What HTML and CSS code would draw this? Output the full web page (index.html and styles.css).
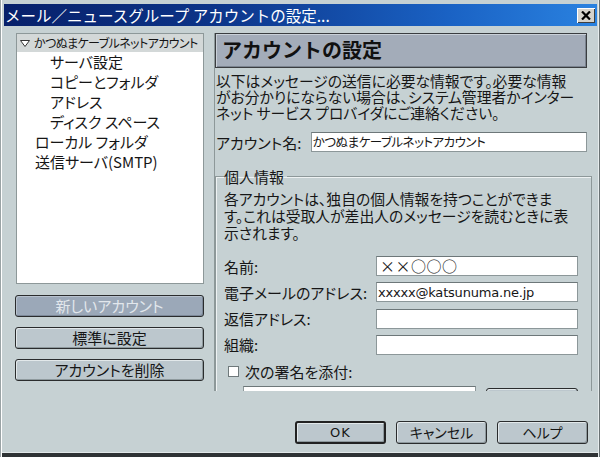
FILE: index.html
```html
<!DOCTYPE html>
<html lang="ja">
<head>
<meta charset="utf-8">
<link rel="stylesheet" href="styles.css">
</head>
<body>
<div class="window">
  <div class="titlebar">
    <span class="title">メール／ニュースグループ アカウントの設定...</span>
    <span class="close"><svg width="10" height="9" viewBox="0 0 10 9"><path d="M1 0.5 L9 8.5 M9 0.5 L1 8.5" stroke="#000" stroke-width="2.2"/></svg></span>
  </div>
  <div class="main">
    <div class="left">
      <div class="tree">
        <div class="row sel"><svg class="twisty" width="10" height="7" viewBox="0 0 10 7"><polygon points="0.5,0.5 9.5,0.5 5,6.5" fill="#fff" stroke="#333" stroke-width="1"/></svg><span class="acct">かつぬまケーブルネットアカウント</span></div>
        <div class="row sub">サーバ設定</div>
        <div class="row sub">コピーとフォルダ</div>
        <div class="row sub">アドレス</div>
        <div class="row sub">ディスク スペース</div>
        <div class="row top">ローカル フォルダ</div>
        <div class="row top">送信サーバ(SMTP)</div>
      </div>
      <div class="btn disabled">新しいアカウント</div>
      <div class="btn">標準に設定</div>
      <div class="btn">アカウントを削除</div>
    </div>
    <div class="pane">
      <div class="header">アカウントの設定</div>
      <div class="desc">
        <div class="line">以下はメッセージの送信に必要な情報です。必要な情報</div>
        <div class="line">がお分かりにならない場合は、システム管理者かインター</div>
        <div class="line">ネット サービス プロバイダにご連絡ください。</div>
      </div>
      <div class="namerow">
        <span class="lbl">アカウント名:</span>
        <div class="input name-input">かつぬまケーブルネットアカウント</div>
      </div>
      <fieldset class="group">
        <legend>個人情報</legend>
        <div class="gdesc">
          <div class="line">各アカウントは、独自の個人情報を持つことができま</div>
          <div class="line">す。これは受取人が差出人のメッセージを読むときに表</div>
          <div class="line">示されます。</div>
        </div>
        <div class="fields">
          <div class="frow"><span class="lbl">名前:</span><div class="input val-name">××○○○</div></div>
          <div class="frow"><span class="lbl">電子メールのアドレス:</span><div class="input val-mail">xxxxx@katsunuma.ne.jp</div></div>
          <div class="frow"><span class="lbl">返信アドレス:</span><div class="input"></div></div>
          <div class="frow"><span class="lbl">組織:</span><div class="input"></div></div>
        </div>
        <div class="checkrow"><span class="checkbox"></span><span class="lbl">次の署名を添付:</span></div>
        <div class="sigrow"><div class="input sig-input"></div><div class="btn sig-btn"></div></div>
      </fieldset>
    </div>
  </div>
  <div class="footer">
    <div class="btn fbtn default">OK</div>
    <div class="btn fbtn">キャンセル</div>
    <div class="btn fbtn">ヘルプ</div>
  </div>
</div>
</body>
</html>
```
FILE: styles.css
```css
html, body {
  margin: 0;
  padding: 0;
}
body {
  width: 600px;
  height: 457px;
  overflow: hidden;
  background: #c6d1d3;
  font-family: "Noto Sans CJK JP", "Liberation Sans", sans-serif;
  color: #161616;
  font-feature-settings: "palt";
}
.window {
  width: 600px;
  height: 457px;
  box-sizing: border-box;
  padding: 4px 3px 0 4px;
  box-shadow: inset 1px 0 #9aa3a5, inset 2px 0 #ffffff, inset -1px 0 #6a7274, inset -2px 0 #e6eced, inset 0 -4px #2f3335, inset 0 -5px #e2e8e9;
  display: flex;
  flex-direction: column;
}
.titlebar {
  height: 22px;
  flex: none;
  background: linear-gradient(90deg, #07206a 0%, #0c3488 35%, #1a62c4 75%, #2a82e0 100%);
  display: flex;
  align-items: flex-start;
  justify-content: space-between;
}
.title {
  color: #fff;
  font-size: 15.5px;
  line-height: 22px;
  padding-left: 1px;
  white-space: nowrap;
  font-feature-settings: normal;
}
.close {
  width: 18px;
  height: 15px;
  margin-top: 4px;
  margin-right: 2px;
  background: #d6d3cc;
  box-sizing: border-box;
  box-shadow: inset 1px 1px #ffffff, inset -1px -1px #404040;
  display: flex;
  align-items: center;
  justify-content: center;
}
.main {
  display: flex;
  padding: 7px 0 0 11px;
  height: 365px;
  box-sizing: border-box;
  flex: none;
}
.left {
  width: 189px;
  flex: none;
  display: flex;
  flex-direction: column;
}
.tree {
  margin-left: 1px;
  height: 256px;
  box-sizing: border-box;
  background: #fff;
  border: 1px solid #8d9899;
  margin-bottom: 11px;
}
.row {
  height: 20px;
  line-height: 20px;
  font-size: 15px;
  white-space: nowrap;
}
.row.sel {
  height: 18px;
  line-height: 18px;
  background: #d3d8d8;
  display: flex;
  align-items: center;
  padding-left: 3px;
}
.twisty {
  margin-right: 4px;
  flex: none;
}
.acct {
  font-size: 12px;
  letter-spacing: -0.6px;
}
.row.sub {
  padding-left: 33px;
}
.row.top {
  padding-left: 18px;
}
.btn {
  height: 22px;
  box-sizing: border-box;
  border: 1px solid #2a2c2d;
  border-radius: 3px;
  background: #bcc7cd;
  box-shadow: inset 1px 1px #e2e8ea, inset -1px -1px #8e999d;
  text-align: center;
  font-size: 15px;
  line-height: 20px;
  margin-bottom: 10px;
}
.btn.disabled {
  background: #9ba8b8;
  color: #e2e7ec;
  box-shadow: inset 1px 1px #b8c2ce, inset -1px -1px #7c8898;
}
.pane {
  margin-left: 10px;
  width: 372px;
  flex: none;
  height: 358px;
  overflow: hidden;
  border-left: 1px solid #8d9899;
  padding-right: 5px;
}
.header {
  width: 372px;
  height: 35px;
  box-sizing: border-box;
  background: #a3acb9;
  border: 1px solid #3a3d40;
  box-shadow: inset 1px 1px #c9d0d8, inset -1px -1px #7b8490;
  font-size: 20px;
  font-weight: bold;
  line-height: 32px;
  padding-left: 6px;
  color: #111;
  font-feature-settings: normal;
}
.line {
  height: 16px;
  line-height: 16px;
  white-space: nowrap;
}
.desc {
  margin-top: 5px;
  padding-left: 1px;
  font-size: 14.8px;
}
.namerow {
  margin-top: 11px;
  display: flex;
  align-items: center;
  height: 20px;
  padding-left: 1px;
}
.namerow .lbl {
  width: 95px;
  font-size: 15px;
}
.input {
  height: 20px;
  box-sizing: border-box;
  background: #fff;
  border: 1px solid #8c9799;
  border-top-color: #6d7779;
  white-space: nowrap;
  overflow: hidden;
}
.name-input {
  width: 277px;
  font-size: 12.5px;
  line-height: 18px;
  padding-left: 1px;
  letter-spacing: -0.5px;
}
.group {
  margin: 16px 0 0 0;
  width: 377px;
  box-sizing: border-box;
  padding: 0 11px 0 8px;
  border: 1px solid #8d9899;
  box-shadow: inset 1px 1px #eef2f3;
  height: 260px;
}
.group legend {
  padding: 0 3px 0 0;
  font-size: 15px;
  line-height: 17px;
}
.gdesc {
  margin-top: 5px;
  font-size: 14.8px;
}
.gdesc .line {
  height: 17px;
  line-height: 17px;
}
.fields {
  margin-top: 15px;
  display: flex;
  flex-direction: column;
  gap: 6.3px;
}
.frow {
  display: flex;
  align-items: center;
  height: 20px;
}
.frow .lbl {
  width: 152px;
  flex: none;
  font-size: 15px;
  white-space: nowrap;
}
.frow .input {
  width: 202px;
}
.val-name {
  font-size: 15px;
  line-height: 18px;
  padding-left: 3px;
  letter-spacing: 0.5px;
}
.val-mail {
  font-family: "DejaVu Sans", "Liberation Sans", sans-serif;
  font-size: 13px;
  line-height: 19px;
  padding-left: 1px;
  letter-spacing: -0.2px;
}
.checkrow {
  margin-top: 7px;
  height: 20px;
  display: flex;
  align-items: center;
  padding-left: 4px;
}
.checkbox {
  width: 11px;
  height: 11px;
  box-sizing: border-box;
  background: #fff;
  border: 1px solid #6f797b;
  margin-right: 6px;
}
.checkrow .lbl {
  font-size: 15px;
}
.sigrow {
  margin-top: 4px;
  display: flex;
  align-items: flex-start;
  padding-left: 19px;
}
.sig-input {
  width: 233px;
  height: 30px;
}
.sig-btn {
  width: 92px;
  margin-left: 10px;
  margin-top: 2px;
  height: 24px;
}
.footer {
  display: flex;
  justify-content: flex-end;
  padding: 30px 9px 0 0;
  gap: 10px;
}
.fbtn {
  width: 91px;
  height: 23px;
  margin: 0;
  font-size: 14px;
  line-height: 21px;
}
.fbtn.default {
  border: 2px solid #222;
  line-height: 19px;
  font-family: "DejaVu Sans", sans-serif;
  font-size: 13px;
  letter-spacing: 1px;
}
```
